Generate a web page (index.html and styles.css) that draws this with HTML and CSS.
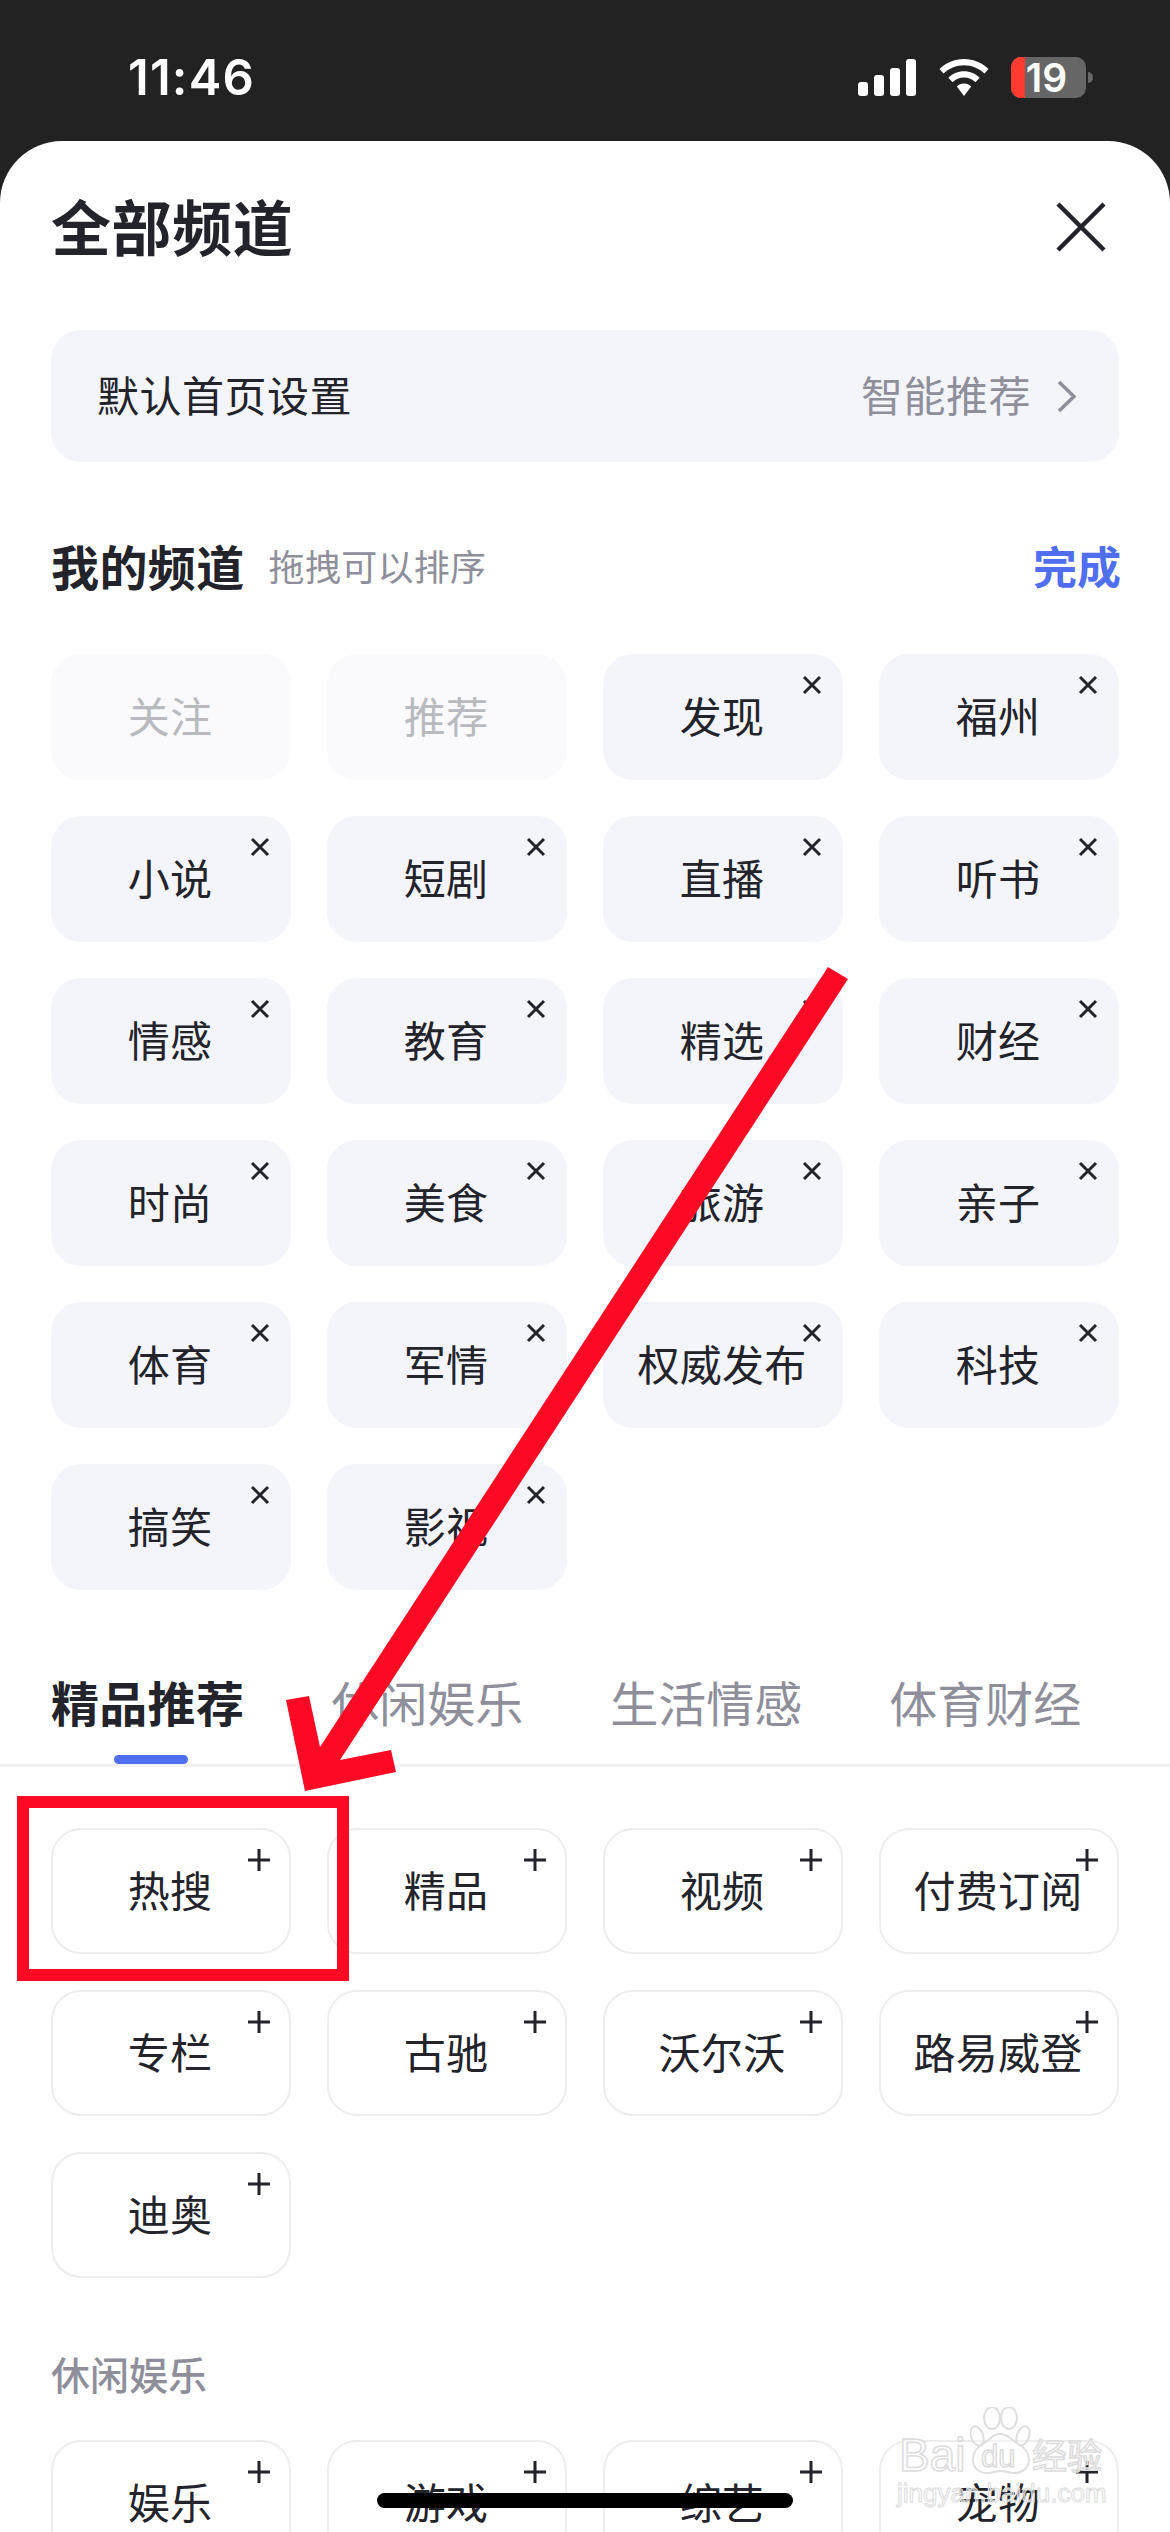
FILE: index.html
```html
<!DOCTYPE html>
<html lang="zh-CN">
<head>
<meta charset="utf-8">
<title>全部频道</title>
<link rel="stylesheet" href="styles.css">
</head>
<body>
<div class="page">
  <header class="status">
    <span class="time">11:46</span>
    <div class="status-icons">
      <svg class="signal" width="58" height="37" viewBox="0 0 58 37"><rect x="0" y="23" width="10" height="14" rx="3"/><rect x="16" y="16" width="10" height="21" rx="3"/><rect x="32" y="9" width="10" height="28" rx="3"/><rect x="48" y="0" width="10" height="37" rx="3"/></svg>
      <svg class="wifi" width="50" height="37" viewBox="0 0 50 37"><path d="M25 0C15.500 0 7 3.700 0.500 10L4.500 14.500C10 9.300 17.200 6.200 25 6.200S40 9.300 45.500 14.500L49.500 10C43 3.700 34.500 0 25 0Z"/><path d="M25 12.300C19 12.300 13.500 14.700 9.400 18.700L13.500 23.200C16.500 20.300 20.500 18.500 25 18.500S33.500 20.300 36.500 23.200L40.600 18.700C36.500 14.700 31 12.300 25 12.300Z"/><path d="M25 24.600C22 24.600 19.700 25.700 17.800 27.400L25 37L32.200 27.400C30.300 25.700 28 24.600 25 24.600Z"/></svg>
      <div class="battery"><span class="battery-low"></span><span class="battery-num">19</span><span class="battery-nub"></span></div>
    </div>
  </header>

  <main class="sheet">
    <div class="sheet-head">
      <h1 class="sheet-title">全部频道</h1>
      <svg class="close" width="50" height="50" viewBox="0 0 50 50"><path d="M2 2L48 48M48 2L2 48"/></svg>
    </div>

    <div class="setting">
      <span class="setting-label">默认首页设置</span>
      <span class="setting-value">智能推荐<svg class="chevron" width="19" height="33" viewBox="0 0 19 33"><path d="M2 2L17 16.500L2 31"/></svg></span>
    </div>

    <div class="mine-head">
      <h2 class="mine-title">我的频道</h2>
      <span class="mine-hint">拖拽可以排序</span>
      <span class="mine-done">完成</span>
    </div>

    <div class="grid">
      <div class="chip chip-off">关注</div>
      <div class="chip chip-off">推荐</div>
      <div class="chip chip-on">发现<svg class="mark" viewBox="0 0 24 24"><path d="M4 4L20 20M20 4L4 20"/></svg></div>
      <div class="chip chip-on">福州<svg class="mark" viewBox="0 0 24 24"><path d="M4 4L20 20M20 4L4 20"/></svg></div>
      <div class="chip chip-on">小说<svg class="mark" viewBox="0 0 24 24"><path d="M4 4L20 20M20 4L4 20"/></svg></div>
      <div class="chip chip-on">短剧<svg class="mark" viewBox="0 0 24 24"><path d="M4 4L20 20M20 4L4 20"/></svg></div>
      <div class="chip chip-on">直播<svg class="mark" viewBox="0 0 24 24"><path d="M4 4L20 20M20 4L4 20"/></svg></div>
      <div class="chip chip-on">听书<svg class="mark" viewBox="0 0 24 24"><path d="M4 4L20 20M20 4L4 20"/></svg></div>
      <div class="chip chip-on">情感<svg class="mark" viewBox="0 0 24 24"><path d="M4 4L20 20M20 4L4 20"/></svg></div>
      <div class="chip chip-on">教育<svg class="mark" viewBox="0 0 24 24"><path d="M4 4L20 20M20 4L4 20"/></svg></div>
      <div class="chip chip-on">精选<svg class="mark" viewBox="0 0 24 24"><path d="M4 4L20 20M20 4L4 20"/></svg></div>
      <div class="chip chip-on">财经<svg class="mark" viewBox="0 0 24 24"><path d="M4 4L20 20M20 4L4 20"/></svg></div>
      <div class="chip chip-on">时尚<svg class="mark" viewBox="0 0 24 24"><path d="M4 4L20 20M20 4L4 20"/></svg></div>
      <div class="chip chip-on">美食<svg class="mark" viewBox="0 0 24 24"><path d="M4 4L20 20M20 4L4 20"/></svg></div>
      <div class="chip chip-on">旅游<svg class="mark" viewBox="0 0 24 24"><path d="M4 4L20 20M20 4L4 20"/></svg></div>
      <div class="chip chip-on">亲子<svg class="mark" viewBox="0 0 24 24"><path d="M4 4L20 20M20 4L4 20"/></svg></div>
      <div class="chip chip-on">体育<svg class="mark" viewBox="0 0 24 24"><path d="M4 4L20 20M20 4L4 20"/></svg></div>
      <div class="chip chip-on">军情<svg class="mark" viewBox="0 0 24 24"><path d="M4 4L20 20M20 4L4 20"/></svg></div>
      <div class="chip chip-on">权威发布<svg class="mark" viewBox="0 0 24 24"><path d="M4 4L20 20M20 4L4 20"/></svg></div>
      <div class="chip chip-on">科技<svg class="mark" viewBox="0 0 24 24"><path d="M4 4L20 20M20 4L4 20"/></svg></div>
      <div class="chip chip-on">搞笑<svg class="mark" viewBox="0 0 24 24"><path d="M4 4L20 20M20 4L4 20"/></svg></div>
      <div class="chip chip-on">影视<svg class="mark" viewBox="0 0 24 24"><path d="M4 4L20 20M20 4L4 20"/></svg></div>
    </div>

    <nav class="tabs">
      <div class="tab tab-active"><span class="tab-text">精品推荐</span><span class="tab-bar"></span></div>
      <div class="tab"><span class="tab-text">休闲娱乐</span></div>
      <div class="tab"><span class="tab-text">生活情感</span></div>
      <div class="tab"><span class="tab-text">体育财经</span></div>
    </nav>

    <div class="grid">
      <div class="chip chip-add">热搜<svg class="mark plus" viewBox="0 0 24 24"><path d="M12 1V23M1 12H23"/></svg></div>
      <div class="chip chip-add">精品<svg class="mark plus" viewBox="0 0 24 24"><path d="M12 1V23M1 12H23"/></svg></div>
      <div class="chip chip-add">视频<svg class="mark plus" viewBox="0 0 24 24"><path d="M12 1V23M1 12H23"/></svg></div>
      <div class="chip chip-add">付费订阅<svg class="mark plus" viewBox="0 0 24 24"><path d="M12 1V23M1 12H23"/></svg></div>
      <div class="chip chip-add">专栏<svg class="mark plus" viewBox="0 0 24 24"><path d="M12 1V23M1 12H23"/></svg></div>
      <div class="chip chip-add">古驰<svg class="mark plus" viewBox="0 0 24 24"><path d="M12 1V23M1 12H23"/></svg></div>
      <div class="chip chip-add">沃尔沃<svg class="mark plus" viewBox="0 0 24 24"><path d="M12 1V23M1 12H23"/></svg></div>
      <div class="chip chip-add">路易威登<svg class="mark plus" viewBox="0 0 24 24"><path d="M12 1V23M1 12H23"/></svg></div>
      <div class="chip chip-add">迪奥<svg class="mark plus" viewBox="0 0 24 24"><path d="M12 1V23M1 12H23"/></svg></div>
    </div>

    <h3 class="group-label">休闲娱乐</h3>

    <div class="grid">
      <div class="chip chip-add">娱乐<svg class="mark plus" viewBox="0 0 24 24"><path d="M12 1V23M1 12H23"/></svg></div>
      <div class="chip chip-add">游戏<svg class="mark plus" viewBox="0 0 24 24"><path d="M12 1V23M1 12H23"/></svg></div>
      <div class="chip chip-add">综艺<svg class="mark plus" viewBox="0 0 24 24"><path d="M12 1V23M1 12H23"/></svg></div>
      <div class="chip chip-add">宠物<svg class="mark plus" viewBox="0 0 24 24"><path d="M12 1V23M1 12H23"/></svg></div>
    </div>
  </main>

  <svg class="arrow" width="1170" height="2532" viewBox="0 0 1170 2532"><polygon points="828,967 848,979 340,1760 391,1750 396,1772 305,1791 286,1700 309,1696 320,1747"/></svg>
  <div class="red-box"></div>
  <div class="watermark">
    <svg class="wm-paw" width="66" height="70" viewBox="0 0 66 70"><ellipse cx="22" cy="11" rx="8" ry="11"/><ellipse cx="39" cy="11" rx="8" ry="11"/><ellipse cx="7" cy="29" rx="6" ry="10" transform="rotate(-20 7 29)"/><ellipse cx="53" cy="29" rx="6" ry="10" transform="rotate(20 53 29)"/><path d="M30 27C22 27 20 33 14 36C6 40 3 46 3 53C3 62 11 67 19 66C24 65 27 64 31 64C36 64 39 66 45 66C53 66 59 60 59 52C59 45 54 40 47 36C40 32 38 27 30 27Z"/></svg>
    <span class="wm-bai">Bai</span>
    <span class="wm-du">du</span>
    <span class="wm-cn">经验</span>
    <span class="wm-url">jingyan.baidu.com</span>
  </div>
  <div class="home-bar"></div>
</div>
</body>
</html>
```
FILE: styles.css
```css
* { box-sizing: border-box; }
html, body { margin: 0; padding: 0; }
body {
  font-family: "Noto Sans CJK SC", "Noto Sans", sans-serif;
  color: #22232b;
  background: #222222;
}
.page {
  position: relative;
  width: 1170px;
  height: 2532px;
  overflow: hidden;
  background: #222222;
}

/* status bar */
.status {
  height: 141px;
  display: flex;
  justify-content: space-between;
  padding: 57px 84px 0 128px;
  color: #fff;
}
.time {
  font-family: Inter, "Liberation Sans", sans-serif;
  font-size: 49px;
  font-weight: 600;
  line-height: 42px;
  letter-spacing: 1.2px;
}
.status-icons {
  display: flex;
  align-items: flex-start;
  gap: 23px;
}
.signal, .wifi { fill: #fff; margin-top: 2px; }
.wifi { margin-right: -1px; }
.battery {
  position: relative;
  width: 75px;
  height: 41px;
  border-radius: 10px;
  background: #666666;
  display: flex;
  align-items: center;
  justify-content: center;
}
.battery-low {
  position: absolute;
  left: 0;
  top: 0;
  width: 14px;
  height: 41px;
  background: #ff3b30;
  border-radius: 10px 0 0 10px;
}
.battery-num {
  position: relative;
  font-family: Inter, "Liberation Sans", sans-serif;
  font-size: 39px;
  line-height: 41px;
  font-weight: 600;
  color: #fff;
  margin-left: -4px;
}
.battery-nub {
  position: absolute;
  right: -7px;
  top: 15px;
  width: 5px;
  height: 11px;
  border-radius: 0 6px 6px 0;
  background: #666666;
}

/* sheet */
.sheet {
  height: 2391px;
  padding: 0 51px;
  background: #fff;
  border-radius: 62px 62px 0 0;
}
.sheet-head {
  height: 172px;
  margin-bottom: 17px;
  display: flex;
  align-items: center;
  justify-content: space-between;
}
.sheet-title {
  margin: 0 0 5px;
  font-size: 60px;
  line-height: 72px;
  font-weight: 700;
  letter-spacing: .6px;
}
.close { fill: none; stroke: #22232b; stroke-width: 4.500; margin-right: 13px; }
.setting {
  height: 132px;
  padding: 0 19px 5px 46px;
  display: flex;
  align-items: center;
  justify-content: space-between;
  background: #f4f5fa;
  border-radius: 30px;
  font-size: 42px;
  letter-spacing: .5px;
}
.setting-value {
  display: flex;
  align-items: center;
  gap: 26px;
  color: #8e8f9b;
  padding-right: 24px;
}
.chevron { fill: none; stroke: #8e8f9b; stroke-width: 3.500; margin-top: 5px; }

.mine-head {
  height: 60px;
  margin: 74px 0 58px;
  padding-bottom: 3px;
  display: flex;
  align-items: center;
}
.mine-title {
  margin: 0;
  font-size: 48px;
  line-height: 60px;
  font-weight: 700;
  letter-spacing: .4px;
}
.mine-hint {
  margin-left: 24px;
  font-size: 36px;
  letter-spacing: .3px;
  color: #8e8f9b;
}
.mine-done {
  margin: 0 -2px 0 auto;
  font-size: 44px;
  font-weight: 700;
  color: #4f6ff0;
}

.grid {
  display: grid;
  grid-template-columns: repeat(4, 240px);
  grid-auto-rows: 126px;
  column-gap: 36px;
  row-gap: 36px;
}
.chip {
  position: relative;
  display: flex;
  align-items: center;
  justify-content: center;
  border-radius: 30px;
  font-size: 42px;
  padding: 0 2px 5px 0;
  letter-spacing: .3px;
  white-space: nowrap;
}
.chip-on { background: #f4f5fa; }
.chip-off { background: #fafafc; color: #b9babf; }
.chip-add { background: #fff; border: 2px solid #ededed; }
.mark {
  position: absolute;
  top: 19px;
  right: 19px;
  width: 24px;
  height: 24px;
  fill: none;
  stroke: #22232b;
  stroke-width: 3;
}
.chip-add .mark { top: 18px; right: 18px; }

.tabs {
  display: flex;
  align-items: flex-start;
  gap: 87px;
  height: 93px;
  margin: 84px -51px 61px;
  padding: 0 51px;
  border-bottom: 3px solid #f2f2f2;
}
.tab {
  display: flex;
  flex-direction: column;
  align-items: center;
  margin-top: -3px;
  font-size: 48px;
  color: #8e8f9b;
}
.tab-text { line-height: 60px; white-space: nowrap; }
.tab-active { color: #22232b; font-weight: 700; letter-spacing: .3px; }
.tab-bar {
  width: 74px;
  height: 9px;
  margin: 24px 0 0 6px;
  border-radius: 5px;
  background: #4f6ff0;
}

.group-label {
  margin: 65px 0 37px;
  font-size: 39px;
  line-height: 60px;
  font-weight: 500;
  color: #8e8f9b;
}

/* overlays */
.arrow {
  position: absolute;
  left: 0;
  top: 0;
  fill: #ff0a24;
  pointer-events: none;
}
.red-box {
  position: absolute;
  left: 17px;
  top: 1796px;
  width: 332px;
  height: 185px;
  border: 12px solid #ff0a24;
}
.home-bar {
  position: absolute;
  left: 377px;
  top: 2493px;
  width: 416px;
  height: 15px;
  border-radius: 8px;
  background: #000;
}
.watermark {
  position: absolute;
  left: 895px;
  top: 2407px;
  width: 215px;
  height: 104px;
}
.wm-paw {
  position: absolute;
  left: 75px;
  top: 0;
  fill: rgba(255,255,255,.35);
  stroke: #dedede;
  stroke-width: 2;
}
.wm-bai, .wm-du, .wm-cn, .wm-url {
  position: absolute;
  color: rgba(255,255,255,.55);
  -webkit-text-stroke: 1.5px #dcdcdc;
  white-space: nowrap;
}
.wm-bai {
  left: 4px;
  top: 22px;
  font-family: "Liberation Sans", sans-serif;
  font-size: 46px;
  line-height: 52px;
}
.wm-du {
  left: 86px;
  top: 32px;
  font-family: "Liberation Sans", sans-serif;
  font-size: 31px;
  line-height: 36px;
}
.wm-cn {
  left: 137px;
  top: 24px;
  font-size: 35px;
  line-height: 46px;
}
.wm-url {
  left: 2px;
  top: 71px;
  font-family: "Liberation Sans", sans-serif;
  font-size: 26px;
  line-height: 30px;
  -webkit-text-stroke: 1px #dcdcdc;
}
```
